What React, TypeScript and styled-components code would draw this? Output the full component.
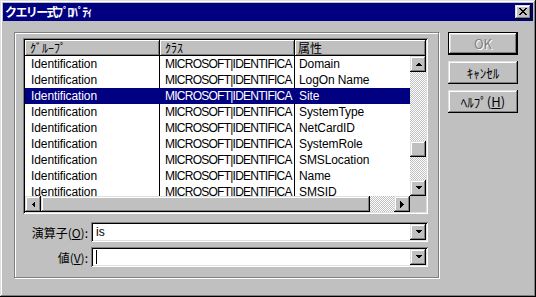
import React from 'react';
import styled, { createGlobalStyle } from 'styled-components';

const Global = createGlobalStyle`
  html, body { margin: 0; padding: 0; background: #c0c0c0; }
  body {
    font-family: "Liberation Sans", "Noto Sans CJK JP", sans-serif;
    font-size: 12px;
    color: #000;
  }
  * { box-sizing: border-box; }
`;

const raised = `box-shadow: inset -1px -1px #000, inset 1px 1px #dfdfdf, inset -2px -2px #808080, inset 2px 2px #fff;`;
const sunken = `box-shadow: inset 1px 1px #808080, inset -1px -1px #fff, inset 2px 2px #000, inset -2px -2px #dfdfdf;`;

const Window = styled.div`
  width: 536px;
  height: 297px;
  padding: 3px;
  background: #c0c0c0;
  ${raised}
  display: flex;
  flex-direction: column;
`;

const TitleBar = styled.div`
  height: 18px;
  background: #000080;
  color: #fff;
  display: flex;
  align-items: center;
  justify-content: space-between;
  padding: 0 2px;
`;

const TitleText = styled.span`
  font-family: "Noto Sans CJK JP", sans-serif;
  font-weight: bold;
  font-size: 12px;
  letter-spacing: -1.6px;
  line-height: 18px;
`;

const CloseButton = styled.div`
  width: 16px;
  height: 14px;
  background: #c0c0c0;
  ${raised}
  display: flex;
  align-items: center;
  justify-content: center;
  padding-bottom: 1px;
`;

const Body = styled.div`
  flex: 1;
  display: flex;
  gap: 9px;
  padding: 11px 0 0 11px;
`;

const GroupBox = styled.div`
  width: 425px;
  height: 246px;
  border: 1px solid #808080;
  box-shadow: inset 1px 1px #fff, 1px 1px #fff;
  padding: 5px 10px 0 8px;
  display: flex;
  flex-direction: column;
`;

const ListBox = styled.div`
  width: 405px;
  height: 176px;
  padding: 2px;
  background: #fff;
  ${sunken}
`;

const ListGrid = styled.div`
  display: grid;
  grid-template-columns: 385px 16px;
  grid-template-rows: 16px 140px 16px;
  width: 401px;
  height: 172px;
`;

const HeaderRow = styled.div`
  grid-column: 1 / 3;
  display: flex;
`;

const HeaderCell = styled.div<{ $w: number; $pl: number }>`
  width: ${p => p.$w}px;
  flex: ${p => (p.$w ? 'none' : '1')};
  height: 16px;
  background: #c0c0c0;
  box-shadow: inset -1px -1px #000, inset 1px 1px #fff, inset -2px -2px #808080;
  padding-left: ${p => p.$pl}px;
  font-family: "Noto Sans CJK JP", sans-serif;
  font-size: 12px;
  line-height: 16px;
  white-space: nowrap;
`;

const Rows = styled.div`
  overflow: hidden;
  background: #fff;
`;

const Row = styled.div<{ $sel?: boolean }>`
  display: flex;
  height: 16px;
  line-height: 16px;
  background: ${p => (p.$sel ? '#000080' : '#fff')};
  color: ${p => (p.$sel ? '#fff' : '#000')};
`;

const Cell = styled.div<{ $w: number; $pl: number; $line?: boolean; $tight?: boolean }>`
  width: ${p => p.$w}px;
  flex: none;
  padding-left: ${p => p.$pl}px;
  white-space: nowrap;
  overflow: hidden;
  letter-spacing: ${p => (p.$tight ? '-0.75px' : '-0.1px')};
  border-right: ${p => (p.$line ? '1px solid #000' : '1px solid transparent')};
`;

const VScroll = styled.div`
  display: flex;
  flex-direction: column;
`;

const HScroll = styled.div`
  display: flex;
`;

const ScrollBtn = styled.div`
  width: 16px;
  height: 16px;
  flex: none;
  background: #c0c0c0;
  ${raised}
  display: flex;
  align-items: center;
  justify-content: center;
`;

const Track = styled.div<{ $size: number }>`
  flex: ${p => (p.$size ? `0 0 ${p.$size}px` : '1')};
  background: repeating-conic-gradient(#c0c0c0 0 25%, #fff 0 50%) 0 0 / 2px 2px;
`;

const Thumb = styled.div<{ $size: number }>`
  flex: 0 0 ${p => p.$size}px;
  background: #c0c0c0;
  ${raised}
`;

const Corner = styled.div`
  background: #c0c0c0;
`;

const FieldRow = styled.div<{ $mt: number }>`
  display: flex;
  align-items: center;
  gap: 3px;
  margin-top: ${p => p.$mt}px;
`;

const Label = styled.div`
  width: 65px;
  text-align: right;
  font-family: "Noto Sans CJK JP", sans-serif;
  font-size: 12px;
  white-space: nowrap;
`;

const Combo = styled.div`
  width: 337px;
  height: 20px;
  background: #fff;
  ${sunken}
  padding: 2px 2px 2px 5px;
  display: flex;
  align-items: center;
  justify-content: space-between;
`;

const ComboText = styled.span`
  line-height: 16px;
`;

const Caret = styled.span`
  width: 1px;
  height: 14px;
  background: #000;
`;

const Buttons = styled.div`
  display: flex;
  flex-direction: column;
  gap: 6px;
  width: 70px;
`;

const Button = styled.div<{ $default?: boolean; $disabled?: boolean }>`
  height: 23px;
  background: #c0c0c0;
  ${p =>
    p.$default
      ? 'border: 1px solid #000; box-shadow: inset -1px -1px #000, inset 1px 1px #fff, inset -2px -2px #808080, inset 2px 2px #dfdfdf;'
      : raised}
  display: flex;
  align-items: center;
  justify-content: center;
  font-family: "Noto Sans CJK JP", sans-serif;
  font-size: 13px;
  color: ${p => (p.$disabled ? '#808080' : '#000')};
  text-shadow: ${p => (p.$disabled ? '1px 1px #fff' : 'none')};
`;

const U = styled.span`
  text-decoration: underline;
`;

const Arrow = ({ dir }: { dir: 'up' | 'down' | 'left' | 'right' }) => {
  const pts = {
    up: '0,4 7,4 3.5,0.5',
    down: '0,0 7,0 3.5,3.5',
    left: '4,0 4,7 0.5,3.5',
    right: '0,0 0,7 3.5,3.5',
  }[dir];
  const vert = dir === 'up' || dir === 'down';
  return (
    <svg width={vert ? 7 : 4} height={vert ? 4 : 7} viewBox={vert ? '0 0 7 4' : '0 0 4 7'} shapeRendering="crispEdges">
      <polygon points={pts} fill="#000" />
    </svg>
  );
};

const CloseGlyph = () => (
  <svg width="8" height="7" viewBox="0 0 8 7" shapeRendering="crispEdges">
    <path d="M0 0h2v1h-2zM6 0h2v1h-2zM1 1h2v1h-2zM5 1h2v1h-2zM2 2h4v1h-4zM3 3h2v1h-2zM2 4h4v1h-4zM1 5h2v1h-2zM5 5h2v1h-2zM0 6h2v1h-2zM6 6h2v1h-2z" fill="#000" />
  </svg>
);

const rows = [
  'Domain',
  'LogOn Name',
  'Site',
  'SystemType',
  'NetCardID',
  'SystemRole',
  'SMSLocation',
  'Name',
  'SMSID',
];

export default function App() {
  return (
    <>
      <Global />
      <Window>
        <TitleBar>
          <TitleText>クエリー式ﾌﾟﾛﾊﾟﾃｨ</TitleText>
          <CloseButton>
            <CloseGlyph />
          </CloseButton>
        </TitleBar>
        <Body>
          <GroupBox>
            <ListBox>
              <ListGrid>
                <HeaderRow>
                  <HeaderCell $w={135} $pl={5}>ｸﾞﾙｰﾌﾟ</HeaderCell>
                  <HeaderCell $w={135} $pl={5}>ｸﾗｽ</HeaderCell>
                  <HeaderCell $w={0} $pl={3}>属性</HeaderCell>
                </HeaderRow>
                <Rows>
                  {rows.map((r, i) => (
                    <Row key={r} $sel={i === 2}>
                      <Cell $w={135} $pl={6} $line={i !== 2}>Identification</Cell>
                      <Cell $w={135} $pl={5} $line={i !== 2} $tight>MICROSOFT|IDENTIFICA</Cell>
                      <Cell $w={115} $pl={4}>{r}</Cell>
                    </Row>
                  ))}
                </Rows>
                <VScroll>
                  <ScrollBtn><Arrow dir="up" /></ScrollBtn>
                  <Track $size={69} />
                  <Thumb $size={16} />
                  <Track $size={0} />
                  <ScrollBtn><Arrow dir="down" /></ScrollBtn>
                </VScroll>
                <HScroll>
                  <ScrollBtn><Arrow dir="left" /></ScrollBtn>
                  <Thumb $size={329} />
                  <Track $size={0} />
                  <ScrollBtn><Arrow dir="right" /></ScrollBtn>
                </HScroll>
                <Corner />
              </ListGrid>
            </ListBox>
            <FieldRow $mt={8}>
              <Label>演算子(<U>O</U>):</Label>
              <Combo>
                <ComboText>is</ComboText>
                <ScrollBtn><Arrow dir="down" /></ScrollBtn>
              </Combo>
            </FieldRow>
            <FieldRow $mt={5}>
              <Label>値(<U>V</U>):</Label>
              <Combo>
                <Caret />
                <ScrollBtn><Arrow dir="down" /></ScrollBtn>
              </Combo>
            </FieldRow>
          </GroupBox>
          <Buttons>
            <Button $default $disabled>OK</Button>
            <Button>ｷｬﾝｾﾙ</Button>
            <Button>ﾍﾙﾌﾟ(<U>H</U>)</Button>
          </Buttons>
        </Body>
      </Window>
    </>
  );
}
